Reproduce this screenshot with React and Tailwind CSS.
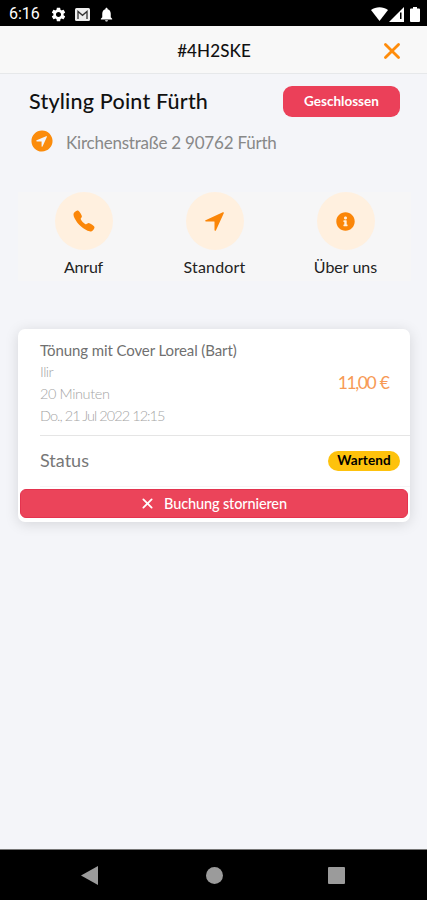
import React from 'react';
import { IoCall, IoClose, IoNavigate, IoNavigateCircle } from 'react-icons/io5';
import { FaInfoCircle } from 'react-icons/fa';
import { MdNotifications, MdSettings } from 'react-icons/md';

const actions = [
  { label: 'Anruf', icon: IoCall, iconClass: 'w-[24px] h-[24px]', textClass: 'tracking-[-0.2px]' },
  { label: 'Standort', icon: IoNavigate, iconClass: 'w-[23px] h-[23px]', textClass: 'tracking-[0.2px]' },
  { label: 'Über uns', icon: FaInfoCircle, iconClass: 'w-[19px] h-[19px]', textClass: 'tracking-[0px]' },
];

function StatusBar() {
  return (
    <div className="h-[26px] shrink-0 bg-black text-white flex items-center justify-between pl-[9px] pr-[7px] pt-[2px]">
      <div className="flex items-center">
        <span className="w-[41px] font-['Roboto',sans-serif] text-[16px] leading-none">6:16</span>
        <MdSettings className="w-[17px] h-[17px]" />
        <svg className="w-[15px] h-[13px] ml-[8px]" viewBox="0 0 15 13">
          <rect width="15" height="13" rx="1.5" fill="#eee" />
          <path d="M3 11V3.5l4.5 3.8L12 3.5V11" fill="none" stroke="#333" strokeWidth="1.3" />
        </svg>
        <MdNotifications className="w-[17px] h-[17px] ml-[8px]" />
      </div>
      <div className="flex items-center">
        <svg className="w-[17px] h-[14px]" viewBox="0 0 17 14">
          <path d="M0 3C5-.8 12-.8 17 3L8.5 14z" fill="#fff" />
        </svg>
        <svg className="w-[15px] h-[15px] ml-[1px]" viewBox="0 0 15 15">
          <path d="M0 15L15 0V15z" fill="#fff" />
          <path d="M11 5.5h1.500V12H11z" fill="#000" />
        </svg>
        <svg className="w-[10px] h-[15px] ml-[6px]" viewBox="0 0 10 15">
          <path d="M3 0h4v1.500h2q1 0 1 1V14q0 1-1 1H1q-1 0-1-1V2.500q0-1 1-1h2z" fill="#fff" />
        </svg>
      </div>
    </div>
  );
}

function Header() {
  return (
    <header className="h-[48px] shrink-0 bg-[#f8f8f8] border-b border-[#e6e8ea] grid grid-cols-[1fr_auto_1fr] items-center pr-[20px] pl-[21px] pt-[2px]">
      <span />
      <h1 className="text-[17px] font-medium tracking-[0.1px] text-[#111]">#4H2SKE</h1>
      <button className="justify-self-end text-[#ff8c0a]">
        <IoClose className="w-[30px] h-[30px]" />
      </button>
    </header>
  );
}

function BookingCard() {
  return (
    <section className="ml-[18px] mr-[17px] mt-[48px] h-[193px] bg-white rounded-[7px] shadow-[0_2px_14px_rgba(0,0,0,0.13)] flex flex-col">
      <div className="ml-[22px] h-[107px] border-b border-[#e5e5e5] flex items-center justify-between pt-[2px] pr-[20px]">
        <div className="text-[14.5px] leading-[21.7px] text-[#a5a5a5] font-light whitespace-nowrap">
          <p className="text-[15px] text-[#707070] font-normal tracking-[-0.1px]">Tönung mit Cover Loreal (Bart)</p>
          <p className="tracking-[-0.5px]">Ilir</p>
          <p className="tracking-[-0.4px]">20 Minuten</p>
          <p className="tracking-[-0.95px]">Do., 21 Jul 2022 12:15</p>
        </div>
        <span className="text-[17.5px] text-[#f79a55]">
          <span className="tracking-[-1.4px]">11,00</span> €
        </span>
      </div>
      <div className="ml-[22px] h-[51px] border-b border-[#f6f6f6] flex items-center justify-between pr-[10px] pb-[1px]">
        <span className="text-[18px] text-[#777]">Status</span>
        <span className="w-[72px] h-[20px] rounded-full bg-[#fec20c] text-black text-[13.5px] font-bold tracking-[0.1px] flex items-center justify-center">Wartend</span>
      </div>
      <button className="ml-[2px] mr-[2px] mt-[2px] h-[29px] pr-[3px] rounded-[6px] bg-[#eb445a] border border-[#e4344f] text-white flex items-center justify-center gap-[7px]">
        <IoClose className="w-[19px] h-[19px]" />
        <span className="text-[14.5px] font-medium tracking-[-0.13px]">Buchung stornieren</span>
      </button>
    </section>
  );
}

export default function App() {
  return (
    <div className="w-full h-[900px] flex flex-col bg-[#f4f5f9] font-['Lato',sans-serif] overflow-hidden">
      <StatusBar />
      <Header />

      <main className="flex-grow">
        <div className="pl-[29px] pr-[27px] pt-[12px] flex items-center justify-between">
          <h2 className="text-[21.5px] font-medium tracking-[0.2px] text-[#111] leading-[31px] whitespace-nowrap">Styling Point Fürth</h2>
          <span className="w-[117px] h-[31px] rounded-[9px] bg-[#eb4059] text-white text-[13.5px] font-bold flex items-center justify-center">
            Geschlossen
          </span>
        </div>
        <div className="pl-[29px] mt-[11px] h-[26px] flex items-center">
          <IoNavigateCircle className="w-[26px] h-[26px] text-[#fb8c0c]" />
          <span className="ml-[11px] pt-[3px] text-[17px] tracking-[-0.22px] text-[#888] leading-[26px] whitespace-nowrap">Kirchenstraße 2 90762 Fürth</span>
        </div>

        {/* Quick actions */}
        <div className="ml-[18px] mr-[16px] mt-[38px] h-[89px] bg-[#f6f6f7] grid grid-cols-3">
          {actions.map(({ label, icon: Icon, iconClass, textClass }) => (
            <div key={label} className="flex flex-col items-center">
              <div className="w-[58px] h-[58px] rounded-full bg-[#fff0df] text-[#fb8608] flex items-center justify-center">
                <Icon className={iconClass} />
              </div>
              <span className={`mt-[6px] text-[16px] leading-[22px] text-[#222] whitespace-nowrap ${textClass}`}>{label}</span>
            </div>
          ))}
        </div>

        <BookingCard />
      </main>

      {/* Android navigation keys */}
      <nav className="h-[51px] shrink-0 bg-black border-t border-[#777] flex items-center text-[#9b9b9b]">
        <svg className="w-[17px] h-[19px] ml-[81px]" viewBox="0 0 17 19"><path d="M0 9.5L17 0v19z" fill="currentColor" /></svg>
        <span className="w-[17px] h-[17px] rounded-full bg-[#9b9b9b] ml-[108px]" />
        <span className="w-[17px] h-[17px] rounded-[1px] bg-[#9b9b9b] ml-[105px]" />
      </nav>
    </div>
  );
}
